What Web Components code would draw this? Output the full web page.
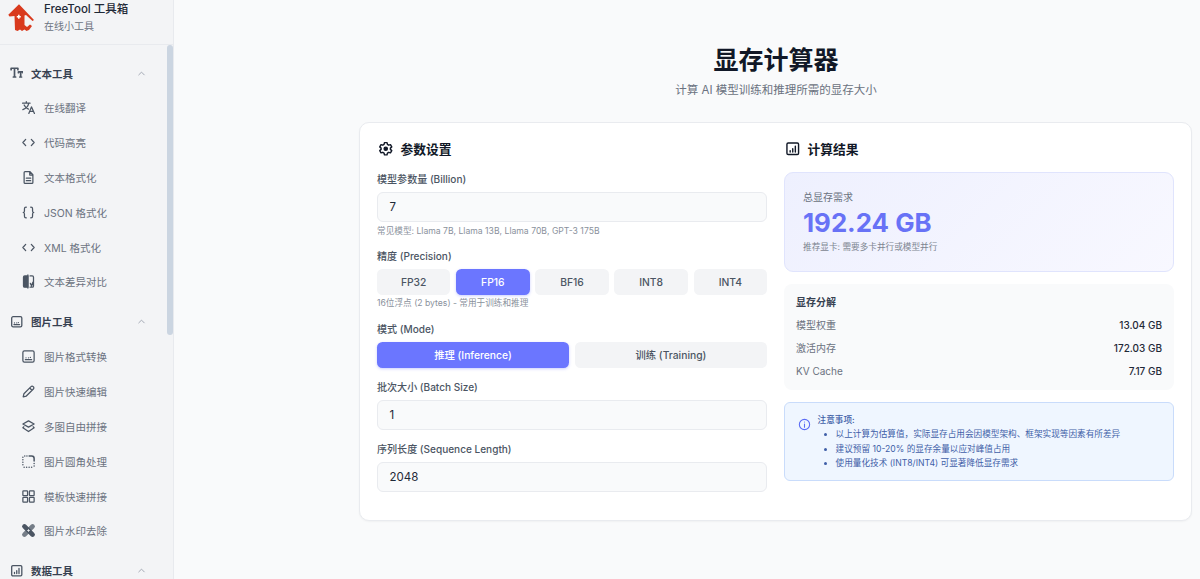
<!DOCTYPE html>
<html lang="zh">
<head>
<meta charset="utf-8">
<title>显存计算器</title>
<style>
  html, body { margin: 0; height: 579px; overflow: hidden; background: #f9fafb; }
  body { font-family: Inter, 'Noto Sans CJK SC', sans-serif; color: #1f2937; display: flex; }
</style>
</head>
<body>
<script>
const ICONS = {
  type: '<path stroke-width="3" d="M2 6.500V4h12v2.500M8 4v15.500M6 19.500h4M15 12v-1.500h8V12M19 10.500v9M17.500 19.500h3"/>',
  translate: '<path d="M2.500 5h12M8.500 2.500V5M12.500 5C11.500 10 8 13.500 3 15.500M5 8c1.200 3 3.700 5.200 7 6.500M12.500 21.500l4.200-10.500 4.800 10.500M14 18h6"/>',
  code: '<path d="M7.500 7L3 12l4.500 5M16.500 7L21 12l-4.500 5"/>',
  doc: '<path d="M6.500 2.500H14l5 5V20a1.500 1.500 0 0 1-1.500 1.500h-11A1.500 1.500 0 0 1 5 20V4a1.500 1.500 0 0 1 1.500-1.500zM14 2.500V8h5M8.500 13h7M8.500 17h7"/>',
  braces: '<path d="M8.500 3.500H8a2.500 2.500 0 0 0-2.500 2.500v3.500A2.500 2.500 0 0 1 3.500 12a2.500 2.500 0 0 1 2 2.500V18A2.500 2.500 0 0 0 8 20.500h.5M15.500 3.500h.5A2.500 2.500 0 0 1 18.500 6v3.500a2.500 2.500 0 0 0 2 2.500 2.500 2.500 0 0 0-2 2.500V18a2.500 2.500 0 0 1-2.500 2.500h-.5"/>',
  diff: '<path d="M11 3H6a2 2 0 0 0-2 2v14a2 2 0 0 0 2 2h5z" fill="currentColor"/><path d="M11 1.500v21M14.500 3H18a2 2 0 0 1 2 2v14a2 2 0 0 1-2 2h-3.500M15 15l2 4 2-6"/>',
  image: '<rect x="3" y="3" width="18" height="18" rx="2.500"/><path d="M7 17h10M8 14v.01M12 14v.01M15 13.500v.01"/>',
  pencil: '<path d="M3.500 20.500l1.200-5L16 4.200a2.400 2.400 0 0 1 3.500 0l.3.300a2.400 2.400 0 0 1 0 3.500L8.500 19.300zM14 6.500l3.500 3.500"/>',
  layers: '<path d="M12 3l9 5-9 5-9-5zM4.500 12.500L3 14l9 6 9-6-1.500-1.500"/>',
  corner: '<path d="M13 3h4a4 4 0 0 1 4 4v4M21 15v.01M21 19v.01M17 21v.01M13 21v.01M9 21v.01M5 21v.01M3 17v.01M3 13v.01M3 9v.01M3 5v.01M6 3v.01M9.500 3v.01" stroke-width="2.400"/>',
  grid: '<rect x="3" y="3" width="7.500" height="7.500" rx="1"/><rect x="13.500" y="3" width="7.500" height="7.500" rx="1"/><rect x="3" y="13.500" width="7.500" height="7.500" rx="1"/><rect x="13.500" y="13.500" width="7.500" height="7.500" rx="1"/>',
  eraser: '<path d="M5.500 5.500l13 13" stroke-width="7.500"/><path d="M5.500 18.500l13-13" stroke-width="7.500" opacity=".75"/><path d="M10.500 12h3M12 10.500v3" stroke="#f3f4f6" stroke-width="1.300"/>',
  chart: '<rect x="3" y="3" width="18" height="18" rx="2"/><path d="M8 17v-2M12 17v-5M16 17V8"/>',
  gear: '<path d="M10 2.500h4l.6 2.800 2 1.200 2.700-.9 2 3.500-2.100 1.900v2l2.100 1.900-2 3.500-2.700-.9-2 1.200-.6 2.800h-4l-.6-2.800-2-1.200-2.700.9-2-3.500 2.100-1.900v-2L2.700 9.100l2-3.500 2.700.9 2-1.200z"/><circle cx="12" cy="12" r="2.500" fill="currentColor"/>',
  info: '<circle cx="12" cy="12" r="9.500"/><path d="M12 11v6M12 7.500v.01"/>',
  chevron: '<path d="M6 15l6-6 6 6"/>',
};

// small icon element, name attribute picks the path
class AppIcon extends HTMLElement {
  connectedCallback() {
    const size = this.getAttribute('size') || 15;
    const weight = this.getAttribute('weight') || 2;
    this.attachShadow({ mode: 'open' }).innerHTML = `
      <style>
        :host { display: inline-flex; flex: none; width: ${size}px; height: ${size}px; }
        svg { width: 100%; height: 100%; fill: none; stroke: currentColor; stroke-width: ${weight}; stroke-linecap: round; stroke-linejoin: round; }
      </style>
      <svg viewBox="0 0 24 24">${ICONS[this.getAttribute('name')] || ''}</svg>`;
  }
}
customElements.define('app-icon', AppIcon);

const navItemTemplate = document.createElement('template');
navItemTemplate.innerHTML = /*html*/ `
  <style>
    :host { display: flex; align-items: center; height: 34.8px; padding-left: 21px; gap: 8px; font-size: 10.5px; color: #6b7280; white-space: nowrap; }
    app-icon { color: #4b5563; }
  </style>
  <app-icon></app-icon>
  <slot></slot>
`;
class NavItem extends HTMLElement {
  connectedCallback() {
    this.attachShadow({ mode: 'open' });
    const content = navItemTemplate.content.cloneNode(true);
    content.querySelector('app-icon').setAttribute('name', this.getAttribute('icon'));
    this.shadowRoot.appendChild(content);
  }
}
customElements.define('nav-item', NavItem);

const navGroupTemplate = document.createElement('template');
navGroupTemplate.innerHTML = /*html*/ `
  <style>
    :host { display: block; margin-bottom: 5.2px; }
    .head { display: flex; align-items: center; height: 35px; padding-left: 9.5px; gap: 8px; font-size: 10.5px; font-weight: 600; color: #374151; }
    .head span { flex: 1; }
    .lead { color: #4b5563; }
    .chev { color: #9ca3af; margin-right: 26px; }
  </style>
  <div class="head">
    <app-icon class="lead" size="13.5" weight="2.3"></app-icon>
    <span></span>
    <app-icon class="chev" name="chevron" size="11"></app-icon>
  </div>
  <slot></slot>
`;
class NavGroup extends HTMLElement {
  connectedCallback() {
    this.attachShadow({ mode: 'open' });
    const content = navGroupTemplate.content.cloneNode(true);
    content.querySelector('.lead').setAttribute('name', this.getAttribute('icon'));
    content.querySelector('span').textContent = this.getAttribute('title');
    this.shadowRoot.appendChild(content);
  }
}
customElements.define('nav-group', NavGroup);

const sidebarTemplate = document.createElement('template');
sidebarTemplate.innerHTML = /*html*/ `
  <style>
    :host { display: flex; flex-direction: column; flex: none; width: 174px; height: 579px; box-sizing: border-box; background: #f3f4f6; border-right: 1px solid #e8eaee; position: relative; overflow: hidden; }
    header { display: flex; flex: none; align-items: flex-start; height: 45px; box-sizing: border-box; border-bottom: 1px solid #e8eaee; padding: 3px 0 0 8px; gap: 9px; }
    header svg { width: 27px; height: 28px; flex: none; margin-top: 1px; }
    .name { font-size: 11.5px; font-weight: 500; color: #1f2937; line-height: 13px; white-space: nowrap; }
    .sub { font-size: 10px; color: #6b7280; line-height: 13px; margin-top: 4px; }
    nav { flex: none; padding-top: 10.5px; }
    .thumb { position: absolute; right: 0; top: 45px; width: 6px; height: 290px; border-radius: 3px; background: #cbd5e1; }
  </style>
  <header>
    <svg viewBox="8 4 27 28">
      <path fill="#d93a1e" d="M19 4.300L34 20l-1.500 1-6.500-6-1.500.5V25l2.500 2 3-2.500 2 1.500-3 4-2.500 1-2-1.500-2.500 1.500-2-1.500-2.500 1.500-2.500-1-.5-14-5 .5-1.200-1.700z"/>
      <path stroke="#fff" stroke-width="1.500" d="M18.800 14.700v4M16.800 16.700h4"/>
    </svg>
    <div>
      <div class="name">FreeTool 工具箱</div>
      <div class="sub">在线小工具</div>
    </div>
  </header>
  <nav><slot></slot></nav>
  <div class="thumb"></div>
`;
class AppSidebar extends HTMLElement {
  connectedCallback() {
    this.attachShadow({ mode: 'open' });
    this.shadowRoot.appendChild(sidebarTemplate.content.cloneNode(true));
  }
}
customElements.define('app-sidebar', AppSidebar);

const formFieldTemplate = document.createElement('template');
formFieldTemplate.innerHTML = /*html*/ `
  <style>
    :host { display: block; }
    .label { font-size: 10.05px; line-height: 14px; font-weight: 500; color: #4b5563; margin-bottom: 6px; }
    .hint { font-size: 8.65px; line-height: 12px; color: #8a919c; margin-top: 2.5px; }
    .hint:empty { display: none; }
  </style>
  <div class="label"></div>
  <slot></slot>
  <div class="hint"></div>
`;
class FormField extends HTMLElement {
  connectedCallback() {
    this.attachShadow({ mode: 'open' });
    const content = formFieldTemplate.content.cloneNode(true);
    content.querySelector('.label').textContent = this.getAttribute('label');
    content.querySelector('.hint').textContent = this.getAttribute('hint') || '';
    this.shadowRoot.appendChild(content);
  }
}
customElements.define('form-field', FormField);

class TextBox extends HTMLElement {
  connectedCallback() {
    this.attachShadow({ mode: 'open' }).innerHTML = `
      <style>
        :host { display: flex; align-items: center; height: 30px; box-sizing: border-box; padding: 0 11.5px; background: #f9fafb; border: 1px solid #e9ebef; border-radius: 6px; font-size: 11.5px; color: #1f2937; }
      </style>
      <slot></slot>`;
  }
}
customElements.define('text-box', TextBox);

class OptionGroup extends HTMLElement {
  connectedCallback() {
    this.attachShadow({ mode: 'open' }).innerHTML = `
      <style>
        :host { display: grid; grid-auto-flow: column; grid-auto-columns: 1fr; gap: 5.8px; }
      </style>
      <slot></slot>`;
  }
}
customElements.define('option-group', OptionGroup);

class OptionButton extends HTMLElement {
  connectedCallback() {
    this.attachShadow({ mode: 'open' }).innerHTML = `
      <style>
        :host { display: flex; align-items: center; justify-content: center; height: 26px; border-radius: 5.5px; background: #f3f4f6; color: #4b5563; font-size: 10.3px; font-weight: 500; white-space: nowrap; }
        :host([active]) { background: #6b76ff; color: #fff; box-shadow: 0 1px 3px rgba(107, 118, 255, .35); }
      </style>
      <slot></slot>`;
  }
}
customElements.define('option-button', OptionButton);

class SectionTitle extends HTMLElement {
  connectedCallback() {
    this.attachShadow({ mode: 'open' }).innerHTML = `
      <style>
        :host { display: flex; align-items: center; height: 20px; box-sizing: border-box; padding: 0 0 3px 1px; gap: 7px; font-size: 12.75px; font-weight: 600; color: #111827; }
      </style>
      <app-icon name="${this.getAttribute('icon')}" size="15.5" weight="2.2"></app-icon>
      <slot></slot>`;
  }
}
customElements.define('section-title', SectionTitle);

class TotalPanel extends HTMLElement {
  connectedCallback() {
    this.attachShadow({ mode: 'open' }).innerHTML = `
      <style>
        :host { display: block; height: 100px; box-sizing: border-box; padding: 17px 18px 0; border: 1px solid #e0e4fd; border-radius: 9px; background: linear-gradient(135deg, #eef0fe, #f8f8ff); }
        .cap { font-size: 10px; line-height: 14px; color: #6b7280; }
        .num { font-size: 25.8px; line-height: 30px; font-weight: 700; color: #6872f6; margin-top: 4px; }
        .rec { font-size: 8.65px; line-height: 12px; color: #7d8590; margin-top: 3px; }
      </style>
      <div class="cap">总显存需求</div>
      <div class="num">192.24 GB</div>
      <div class="rec">推荐显卡: 需要多卡并行或模型并行</div>`;
  }
}
customElements.define('total-panel', TotalPanel);

class BreakdownRow extends HTMLElement {
  connectedCallback() {
    this.attachShadow({ mode: 'open' }).innerHTML = `
      <style>
        :host { display: flex; justify-content: space-between; align-items: center; height: 23px; font-size: 10px; color: #6b7280; }
        b { font-weight: 500; color: #1f2937; }
      </style>
      <span>${this.getAttribute('name')}</span><b>${this.getAttribute('value')}</b>`;
  }
}
customElements.define('breakdown-row', BreakdownRow);

class BreakdownPanel extends HTMLElement {
  connectedCallback() {
    this.attachShadow({ mode: 'open' }).innerHTML = `
      <style>
        :host { display: block; height: 106px; box-sizing: border-box; padding: 11px 12px 0; border-radius: 8px; background: #f9fafb; }
        .t { font-size: 10px; line-height: 14px; font-weight: 600; color: #374151; margin-bottom: 4px; }
      </style>
      <div class="t">显存分解</div>
      <slot></slot>`;
  }
}
customElements.define('breakdown-panel', BreakdownPanel);

class NotePanel extends HTMLElement {
  connectedCallback() {
    this.attachShadow({ mode: 'open' }).innerHTML = `
      <style>
        :host { display: flex; height: 79px; box-sizing: border-box; padding: 10px 12px 0 13px; gap: 6.5px; border: 1px solid #c9dcfb; border-radius: 6px; background: #eff6ff; color: #3f5fa8; font-size: 8.65px; line-height: 14.6px; }
        app-icon { color: #5b6cf5; margin-top: 5px; }
        .t { font-weight: 500; line-height: 14px; }
        ul { margin: 0; padding: 0 0 0 18px; }
      </style>
      <app-icon name="info" size="13"></app-icon>
      <div>
        <div class="t">注意事项:</div>
        <ul>
          <li>以上计算为估算值，实际显存占用会因模型架构、框架实现等因素有所差异</li>
          <li>建议预留 10-20% 的显存余量以应对峰值占用</li>
          <li>使用量化技术 (INT8/INT4) 可显著降低显存需求</li>
        </ul>
      </div>`;
  }
}
customElements.define('note-panel', NotePanel);

const calcPageTemplate = document.createElement('template');
calcPageTemplate.innerHTML = /*html*/ `
  <style>
    :host { display: block; flex: 1; min-width: 0; box-sizing: border-box; padding: 43px 8px 0 186px; }
    h1 { margin: 0; text-align: center; font-size: 25px; line-height: 34px; font-weight: 700; color: #111827; }
    .sub { text-align: center; font-size: 11.5px; line-height: 16px; color: #6b7280; margin-top: 5px; }
    .card { display: grid; grid-template-columns: 1fr 1fr; column-gap: 17px; margin: 24px 0 0 -1px; padding: 17px 17px 28px; background: #fff; border: 1px solid #e9ebef; border-radius: 10px; box-shadow: 0 1px 2px rgba(0, 0, 0, .04); }
    .col { display: flex; flex-direction: column; gap: 12px; min-width: 0; }
    .col.form { gap: 12.2px; }
  </style>
  <h1>显存计算器</h1>
  <div class="sub">计算 AI 模型训练和推理所需的显存大小</div>
  <div class="card">
    <div class="col form"><slot name="form"></slot></div>
    <div class="col"><slot name="result"></slot></div>
  </div>
`;
class CalcPage extends HTMLElement {
  connectedCallback() {
    this.attachShadow({ mode: 'open' });
    this.shadowRoot.appendChild(calcPageTemplate.content.cloneNode(true));
  }
}
customElements.define('calc-page', CalcPage);
</script>

<app-sidebar>
  <nav-group icon="type" title="文本工具">
    <nav-item icon="translate">在线翻译</nav-item>
    <nav-item icon="code">代码高亮</nav-item>
    <nav-item icon="doc">文本格式化</nav-item>
    <nav-item icon="braces">JSON 格式化</nav-item>
    <nav-item icon="code">XML 格式化</nav-item>
    <nav-item icon="diff">文本差异对比</nav-item>
  </nav-group>
  <nav-group icon="image" title="图片工具">
    <nav-item icon="image">图片格式转换</nav-item>
    <nav-item icon="pencil">图片快速编辑</nav-item>
    <nav-item icon="layers">多图自由拼接</nav-item>
    <nav-item icon="corner">图片圆角处理</nav-item>
    <nav-item icon="grid">模板快速拼接</nav-item>
    <nav-item icon="eraser">图片水印去除</nav-item>
  </nav-group>
  <nav-group icon="chart" title="数据工具"></nav-group>
</app-sidebar>

<calc-page>
  <section-title slot="form" icon="gear">参数设置</section-title>
  <form-field slot="form" label="模型参数量 (Billion)" hint="常见模型: Llama 7B, Llama 13B, Llama 70B, GPT-3 175B">
    <text-box>7</text-box>
  </form-field>
  <form-field slot="form" label="精度 (Precision)" hint="16位浮点 (2 bytes) - 常用于训练和推理">
    <option-group>
      <option-button>FP32</option-button>
      <option-button active>FP16</option-button>
      <option-button>BF16</option-button>
      <option-button>INT8</option-button>
      <option-button>INT4</option-button>
    </option-group>
  </form-field>
  <form-field slot="form" label="模式 (Mode)">
    <option-group>
      <option-button active>推理 (Inference)</option-button>
      <option-button>训练 (Training)</option-button>
    </option-group>
  </form-field>
  <form-field slot="form" label="批次大小 (Batch Size)"><text-box>1</text-box></form-field>
  <form-field slot="form" label="序列长度 (Sequence Length)"><text-box>2048</text-box></form-field>

  <section-title slot="result" icon="chart">计算结果</section-title>
  <total-panel slot="result"></total-panel>
  <breakdown-panel slot="result">
    <breakdown-row name="模型权重" value="13.04 GB"></breakdown-row>
    <breakdown-row name="激活内存" value="172.03 GB"></breakdown-row>
    <breakdown-row name="KV Cache" value="7.17 GB"></breakdown-row>
  </breakdown-panel>
  <note-panel slot="result"></note-panel>
</calc-page>
</body>
</html>
